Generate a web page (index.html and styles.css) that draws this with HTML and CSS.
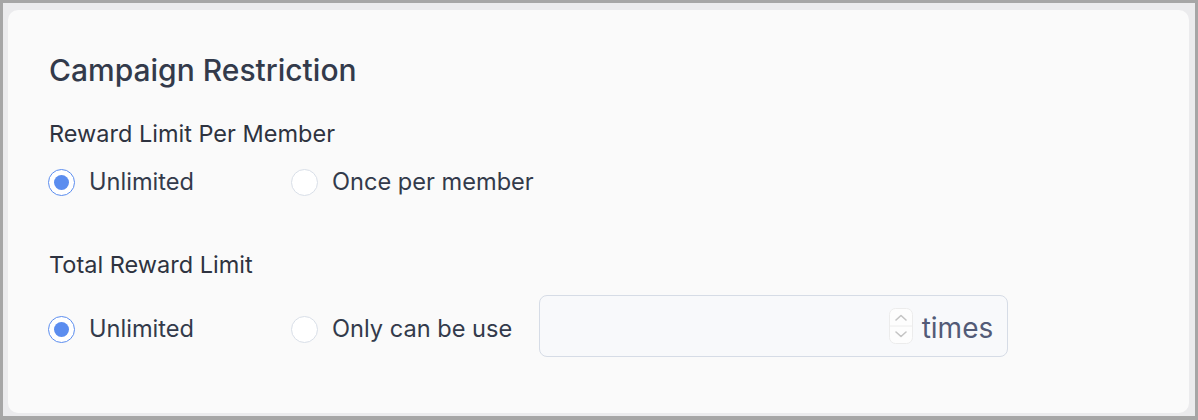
FILE: index.html
```html
<!DOCTYPE html>
<html>
<head>
<meta charset="utf-8">
<link rel="stylesheet" href="styles.css">
</head>
<body>
<div class="frame">
  <div class="card">
    <h2 class="title">Campaign Restriction</h2>
    <div class="group">
      <div class="label">Reward Limit Per Member</div>
      <div class="options">
        <label class="opt opt-first"><span class="radio checked"></span><span>Unlimited</span></label>
        <label class="opt"><span class="radio"></span><span>Once per member</span></label>
      </div>
    </div>
    <div class="group group-2">
      <div class="label">Total Reward Limit</div>
      <div class="options">
        <label class="opt opt-first"><span class="radio checked"></span><span>Unlimited</span></label>
        <label class="opt"><span class="radio"></span><span>Only can be use</span></label>
        <div class="input">
          <span class="spinner">
            <svg width="24" height="36" viewBox="0 0 24 36">
              <rect x="0.5" y="0.5" width="23" height="35" rx="6" fill="#fdfdfd" stroke="#ececec"/>
              <line x1="1" y1="18" x2="23" y2="18" stroke="#ececec"/>
              <path d="M7 12 L12 7.5 L17 12" fill="none" stroke="#c4c4c4" stroke-width="1.6" stroke-linecap="round" stroke-linejoin="round"/>
              <path d="M7 24 L12 28.5 L17 24" fill="none" stroke="#c4c4c4" stroke-width="1.6" stroke-linecap="round" stroke-linejoin="round"/>
            </svg>
          </span>
          <span class="unit">times</span>
        </div>
      </div>
    </div>
  </div>
</div>
</body>
</html>
```

FILE: styles.css
```css
* { box-sizing: border-box; }
html, body { margin: 0; padding: 0; }
body {
  background: #a6a6a6;
  width: 1198px;
  height: 420px;
  padding: 3px 3px 4px 3px;
  font-family: Inter, "Noto Sans", sans-serif;
}
.frame {
  background: #ebebed;
  height: 100%;
  padding: 7px 6px 3px 5px;
}
.card {
  background: #fafafa;
  border-radius: 10px;
  height: 100%;
  padding: 42px 40px 0 40px;
}
.title {
  margin: 0 0 0 1px;
  font-size: 30px;
  font-weight: 500;
  line-height: 36px;
  color: #333a4b;
}
.group { margin-top: 31px; }
.group-2 { margin-top: 54px; }
.label {
  margin-left: 1px;
  font-size: 23.5px;
  line-height: 30px;
  color: #2e3340;
}
.options {
  display: flex;
  align-items: center;
  margin-top: 19px;
}
.group-2 .options { margin-top: 15px; }
.opt {
  display: flex;
  align-items: center;
  gap: 14px;
  font-size: 23.6px;
  color: #333a4b;
  line-height: 28px;
}
.opt-first { width: 243px; }
.radio {
  flex: none;
  width: 27px;
  height: 27px;
  border-radius: 50%;
  border: 1px solid #d9dfe8;
  background: #fff;
  display: inline-flex;
  align-items: center;
  justify-content: center;
}
.radio.checked { border-color: #5b8def; }
.radio.checked::after {
  content: "";
  width: 15px;
  height: 15px;
  border-radius: 50%;
  background: #5b8def;
}
.input {
  margin-left: 27px;
  margin-bottom: 6px;
  width: 469px;
  height: 62px;
  border: 1px solid #d6dce6;
  border-radius: 8px;
  background: #f8f9fb;
  display: flex;
  align-items: center;
  justify-content: flex-end;
  padding-right: 14px;
  padding-top: 3px;
}
.spinner { display: flex; margin-right: 9px; margin-top: -3px; }
.unit {
  font-size: 28px;
  color: #535b77;
}
```
